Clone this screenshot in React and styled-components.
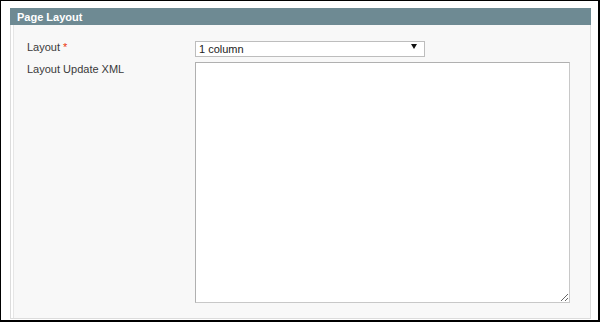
import styled, { createGlobalStyle } from "styled-components";

const GlobalStyle = createGlobalStyle`
  html, body {
    margin: 0;
    padding: 0;
    background: #fff;
  }
  body {
    font-family: "Liberation Sans", Arial, sans-serif;
  }
`;

const Frame = styled.div`
  box-sizing: border-box;
  width: 600px;
  height: 322px;
  border-style: solid;
  border-color: #000;
  border-width: 1px 2px 2px 1px;
  padding: 7px 6px 0 9px;
  background: #fff;
`;

const Panel = styled.section`
  display: flex;
  flex-direction: column;
  width: 581px;
  height: 311px;
`;

const Header = styled.h3`
  margin: 0;
  height: 17px;
  padding: 0 7px;
  background: #6e8a93;
  color: #fff;
  font-size: 11px;
  font-weight: bold;
  line-height: 18px;
`;

const Body = styled.div`
  flex: 1;
  box-sizing: border-box;
  background: #f8f8f8;
  border: 1px solid #dcdcdc;
  border-top: none;
  box-shadow: inset 2px 0 0 #fff, inset 3px 0 0 #e6e6e6;
  padding: 14px 20px 15px 16px;
  display: grid;
  grid-template-columns: 168px 1fr;
  row-gap: 7px;
  align-content: start;
`;

const Label = styled.label`
  font-size: 11px;
  color: #3a3a3a;
  line-height: 14px;
  padding-top: ${(p) => p.$top || 0}px;
`;

const Required = styled.span`
  color: #eb340a;
  margin-left: 3px;
`;

const SelectWrap = styled.div`
  position: relative;
  width: 230px;
  height: 16px;
`;

const Select = styled.select`
  appearance: none;
  box-sizing: border-box;
  width: 100%;
  height: 16px;
  margin: 0;
  padding: 0 0 0 3px;
  border: 1px solid #bdbdbd;
  border-radius: 0;
  background: #fff;
  font-family: "Liberation Sans", Arial, sans-serif;
  font-size: 11px;
  color: #222;
  line-height: 14px;
  outline: none;
`;

const Arrow = styled.span`
  position: absolute;
  right: 8px;
  top: 5px;
  width: 0;
  height: 0;
  border-left: 3px solid transparent;
  border-right: 3px solid transparent;
  border-top: 5px solid #111;
  pointer-events: none;
`;

const TextArea = styled.textarea`
  box-sizing: border-box;
  width: 375px;
  height: 241px;
  margin: 0;
  padding: 2px;
  border: 1px solid #b0b0b0;
  border-right-color: #c8c8c8;
  border-bottom-color: #c8c8c8;
  border-radius: 0;
  background: #fff;
  font-family: "Liberation Sans", Arial, sans-serif;
  font-size: 11px;
  outline: none;
`;

const App = () => {
  return (
    <>
      <GlobalStyle />
      <Frame>
        <Panel>
          <Header>Page Layout</Header>
          <Body>
            <Label $top={1}>
              Layout<Required>*</Required>
            </Label>
            <SelectWrap>
              <Select defaultValue="one_column">
                <option value="empty">Empty</option>
                <option value="one_column">1 column</option>
                <option value="two_columns_left">2 columns with left bar</option>
                <option value="two_columns_right">2 columns with right bar</option>
                <option value="three_columns">3 columns</option>
              </Select>
              <Arrow />
            </SelectWrap>
            <Label $top={0}>Layout Update XML</Label>
            <TextArea />
          </Body>
        </Panel>
      </Frame>
    </>
  );
};

export default App;
